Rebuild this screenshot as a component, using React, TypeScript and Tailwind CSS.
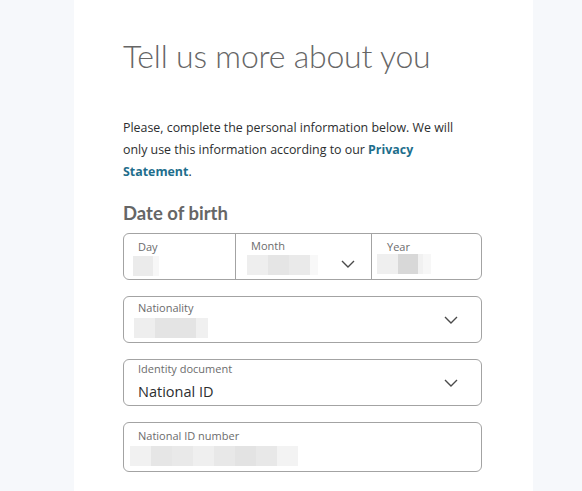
import React from "react";

function Chevron() {
  return (
    <svg width="14" height="8" viewBox="0 0 14 8" fill="none" className="shrink-0">
      <polyline points="1,1 7,7 13,1" stroke="#4a4a4a" strokeWidth="1.4" />
    </svg>
  );
}

function Blur({ parts }: { parts: [number, string][] }) {
  return (
    <div className="flex h-[20px]">
      {parts.map(([w, c], i) => (
        <div key={i} style={{ width: w, background: c }} />
      ))}
    </div>
  );
}

function Field({
  label,
  children,
  select,
  tall,
}: {
  label: string;
  children: React.ReactNode;
  select?: boolean;
  tall?: boolean;
}) {
  return (
    <div
      className={`flex items-center justify-between rounded-[6px] border border-[#a3a3a3] pl-[14px] pr-[23px] ${
        tall ? "h-[50px]" : "h-[47px]"
      }`}
    >
      <div className="flex flex-col">
        <span className="text-[11px] leading-[13px] text-[#6c6c6c]">{label}</span>
        <div className="mt-[4px]">{children}</div>
      </div>
      {select && <Chevron />}
    </div>
  );
}

export default function App() {
  return (
    <div
      className="flex h-[491px] bg-[#f6f8fb]"
      style={{ fontFamily: '"Open Sans", "Liberation Sans", sans-serif' }}
    >
      <div className="ml-[74px] w-[459px] bg-white pl-[49px] pr-[51px] pt-[36px]">
        <h1
          className="text-[32px] font-light leading-[40px] tracking-[-0.2px] text-[#666666]"
          style={{ fontFamily: "Lato, sans-serif" }}
        >
          Tell us more about you
        </h1>
        <p className="mt-[41px] text-[12.4px] leading-[22px] text-[#2c2e2f]">
          Please, complete the personal information below. We will
          <br />
          only use this information according to our{" "}
          <span className="font-bold text-[#1e6e8c]">Privacy</span>
          <br />
          <span className="font-bold text-[#1e6e8c]">Statement</span>.
        </p>
        <h2
          className="mt-[18px] text-[18.5px] font-bold leading-[24px] text-[#666666]"
          style={{ fontFamily: "Lato, sans-serif" }}
        >
          Date of birth
        </h2>
        <div className="mt-[8px] flex h-[47px] rounded-[6px] border border-[#a3a3a3]">
          <div className="flex w-[111px] flex-col pl-[14px] pt-[6px]">
            <span className="text-[11px] leading-[13px] text-[#6c6c6c]">Day</span>
            <div className="ml-[-5px] mt-[3px]">
              <Blur parts={[[20, "#ebebeb"], [6, "#f7f7f7"]]} />
            </div>
          </div>
          <div className="flex w-[136px] items-center justify-between border-l border-[#a3a3a3] pr-[16px]">
            <div className="flex flex-col pl-[15px]">
              <span className="text-[11px] leading-[13px] text-[#6c6c6c]">Month</span>
              <div className="ml-[-4px] mt-[3px]">
                <Blur parts={[[21, "#eeeeee"], [21, "#e5e5e5"], [21, "#eaeaea"], [8, "#f8f8f8"]]} />
              </div>
            </div>
            <div className="mt-[14px]">
              <Chevron />
            </div>
          </div>
          <div className="flex flex-1 flex-col border-l border-[#a3a3a3] pl-[15px] pt-[6px]">
            <span className="text-[11px] leading-[13px] text-[#6c6c6c]">Year</span>
            <div className="ml-[-10px] mt-[1px]">
              <Blur parts={[[21, "#efefef"], [20, "#d8d8d8"], [5, "#f1f1f1"], [8, "#f7f7f7"]]} />
            </div>
          </div>
        </div>

        <div className="mt-[16px] flex flex-col gap-[16px]">
          <Field label="Nationality" select>
            <div className="ml-[-4px]">
              <Blur parts={[[21, "#eeeeee"], [41, "#e4e4e4"], [12, "#f0f0f0"]]} />
            </div>
          </Field>
          <Field label="Identity document" select>
            <span className="text-[14.5px] leading-[18px] text-[#2c2e2f]">National ID</span>
          </Field>
          <Field label="National ID number" tall>
            <div className="ml-[-8px]">
              <Blur
                parts={[
                  [21, "#f1f1f1"],
                  [21, "#e6e6e6"],
                  [21, "#e9e9e9"],
                  [21, "#efefef"],
                  [21, "#e8e8e8"],
                  [21, "#e3e3e3"],
                  [21, "#e8e8e8"],
                  [21, "#f3f3f3"],
                ]}
              />
            </div>
          </Field>
        </div>
      </div>
    </div>
  );
}
